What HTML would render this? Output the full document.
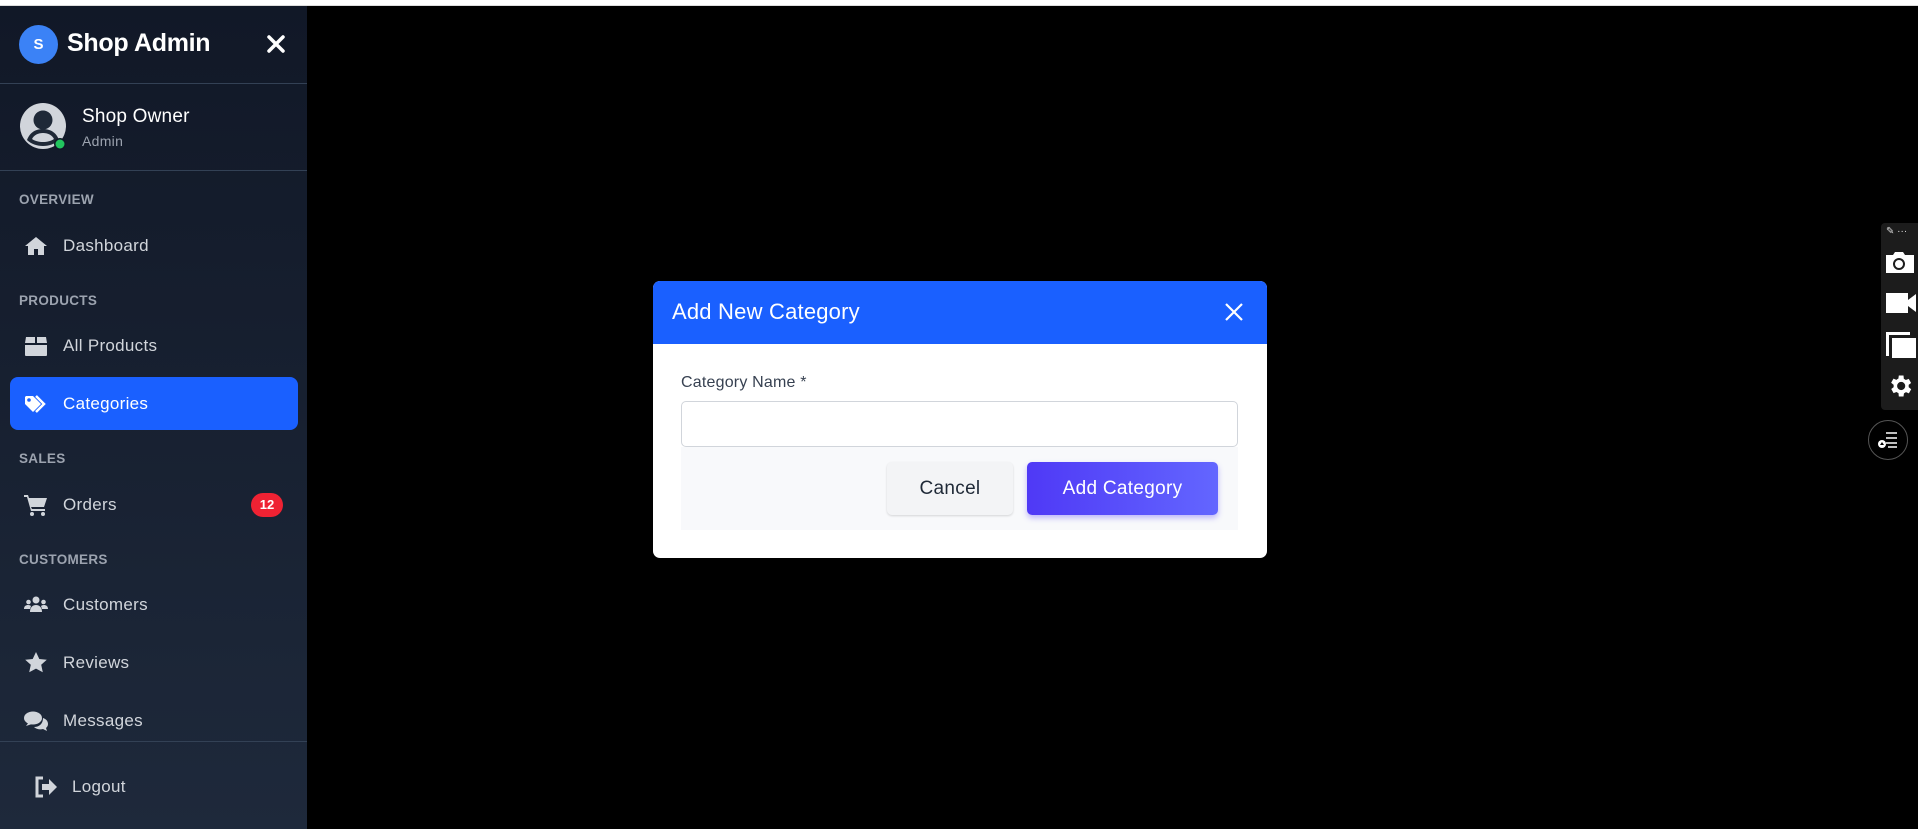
<!DOCTYPE html>
<html><head><meta charset="utf-8"><style>
*{box-sizing:border-box;margin:0;padding:0}
body{width:1918px;height:829px;background:#000;font-family:"Liberation Sans",sans-serif;position:relative;overflow:hidden}
.top{position:absolute;left:0;top:0;width:1918px;height:6px;background:#fff;border-bottom:1px solid #ddd}
.sb{position:absolute;left:0;top:6px;width:307px;height:823px;background:linear-gradient(#111827,#1e293b)}
.a{position:absolute;white-space:nowrap}
.sec{position:absolute;left:19px;font-size:13.5px;font-weight:bold;color:#9ca3af;letter-spacing:.3px}
.it{position:absolute;left:63px;font-size:17px;color:#d1d5db;letter-spacing:.3px}
.ic{position:absolute;left:24px;width:24px;height:24px}
.hr{position:absolute;left:0;width:307px;height:1px;background:#334155}
</style></head><body>
<div class="top"></div>
<div class="sb"></div>
<div class="a" style="left:19px;top:25px;width:39px;height:39px;border-radius:50%;background:#3b82f6;color:#fff;font-weight:bold;font-size:15px;text-align:center;line-height:39px">S</div>
<div class="a" style="left:67px;top:29px;font-size:25px;font-weight:bold;color:#fff;letter-spacing:-.3px">Shop Admin</div>
<svg class="a" style="left:267px;top:35px" width="18" height="18" viewBox="0 0 18 18"><path d="M2 2L16 16M16 2L2 16" stroke="#fff" stroke-width="3.5" stroke-linecap="round"/></svg>
<div class="hr" style="top:83px"></div>
<svg class="a" style="left:20px;top:103px" width="47" height="47" viewBox="0 0 47 47"><circle cx="23" cy="23" r="23" fill="#d1d5db"/><circle cx="23" cy="17" r="9.5" fill="#1f2937"/><path d="M7 37c3-8 9-11 16-11s13 3 16 11c-4 4-10 6-16 6s-12-2-16-6z" fill="#1f2937"/><path d="M12 36c2-4 6-6 11-6s9 2 11 6c-3 2-7 3-11 3s-8-1-11-3z" fill="#d1d5db"/><circle cx="40" cy="41" r="6" fill="#111827"/><circle cx="40" cy="41" r="4.5" fill="#22c55e"/></svg>
<div class="a" style="left:82px;top:106px;font-size:19px;color:#fff;letter-spacing:.2px">Shop Owner</div>
<div class="a" style="left:82px;top:133px;font-size:14px;color:#9ca3af;letter-spacing:.3px">Admin</div>
<div class="hr" style="top:170px"></div>
<div class="sec" style="top:192px">OVERVIEW</div>
<svg class="ic" style="top:234px" viewBox="0 0 24 24"><path d="M12 3L1 12h3v9h6v-6h4v6h6v-9h3z" fill="#d1d5db"/></svg>
<div class="it" style="top:236px">Dashboard</div>
<div class="sec" style="top:293px">PRODUCTS</div>
<svg class="ic" style="top:334px" viewBox="0 0 24 24"><path d="M2 3h9v6H1zM13 3h9l1 6H13zM1 11h22v10a1 1 0 01-1 1H2a1 1 0 01-1-1z" fill="#d1d5db"/></svg>
<div class="it" style="top:336px">All Products</div>
<div class="a" style="left:10px;top:377px;width:288px;height:53px;border-radius:8px;background:#1a60ff"></div>
<svg class="ic" style="top:392px" viewBox="0 0 24 24"><path d="M1 5v7l8 8 8-8-8-8H2z" fill="#fff"/><circle cx="5" cy="8" r="1.8" fill="#1a60ff"/><path d="M12 4l8 8-8 8" stroke="#fff" stroke-width="2.5" fill="none"/></svg>
<div class="it" style="top:394px;color:#fff">Categories</div>
<div class="sec" style="top:451px">SALES</div>
<svg class="ic" style="top:493px" viewBox="0 0 24 24"><path d="M0 2h4l1 3h18l-3 9H7l1 2h13v2H7L3 4H0z" fill="#d1d5db"/><circle cx="8" cy="21" r="2" fill="#d1d5db"/><circle cx="19" cy="21" r="2" fill="#d1d5db"/></svg>
<div class="it" style="top:495px">Orders</div>
<div class="a" style="left:251px;top:493px;width:32px;height:24px;border-radius:12px;background:#ef2233;color:#fff;font-weight:bold;font-size:13px;text-align:center;line-height:24px">12</div>
<div class="sec" style="top:552px">CUSTOMERS</div>
<svg class="ic" style="top:593px" viewBox="0 0 24 24"><circle cx="12" cy="7" r="3.5" fill="#d1d5db"/><circle cx="4.5" cy="9" r="2.3" fill="#d1d5db"/><circle cx="19.5" cy="9" r="2.3" fill="#d1d5db"/><path d="M6 19c0-5 3-7 6-7s6 2 6 7z M0 16c0-3 2-4 4-4s3 1 3 1l-1 3zM24 16c0-3-2-4-4-4s-3 1-3 1l1 3z" fill="#d1d5db"/></svg>
<div class="it" style="top:595px">Customers</div>
<svg class="ic" style="top:651px" viewBox="0 0 24 24"><path d="M12 1l3.3 7 7.5.8-5.6 5 1.6 7.5L12 17.6 5.2 21.3l1.6-7.5-5.6-5 7.5-.8z" fill="#d1d5db"/></svg>
<div class="it" style="top:653px">Reviews</div>
<svg class="ic" style="top:709px" viewBox="0 0 24 24"><ellipse cx="9" cy="9" rx="9" ry="6.5" fill="#d1d5db"/><path d="M2 17l3-4 3 2z" fill="#d1d5db"/><path d="M19 9c3 1 5 3 5 6 0 2-1 3-2 4l1 3-4-2c-3 1-7 0-9-2 5 0 9-3 9-9z" fill="#d1d5db"/></svg>
<div class="it" style="top:711px">Messages</div>
<div class="hr" style="top:741px"></div>
<svg class="a" style="left:34px;top:776px" width="24" height="22" viewBox="0 0 24 22"><path d="M9 2H3v18h6" stroke="#d1d5db" stroke-width="3" fill="none"/><path d="M8 8h7V3l8 8-8 8v-5H8z" fill="#d1d5db"/></svg>
<div class="it" style="top:777px;left:72px">Logout</div>
<div class="a" style="left:653px;top:281px;width:614px;height:277px;background:#fff;border-radius:7px;overflow:hidden">
 <div style="height:63px;background:#1a60ff;position:relative">
  <div class="a" style="left:19px;top:18px;font-size:22px;color:#fff;letter-spacing:.2px">Add New Category</div>
  <svg class="a" style="left:572px;top:22px" width="18" height="18" viewBox="0 0 18 18"><path d="M1 1L17 17M17 1L1 17" stroke="#fff" stroke-width="2.2"/></svg>
 </div>
 <div class="a" style="left:28px;top:93px;font-size:16px;color:#374151;letter-spacing:.2px">Category Name *</div>
 <div class="a" style="left:28px;top:120px;width:557px;height:46px;border:1px solid #d1d5db;border-radius:5px;background:#fff"></div>
 <div class="a" style="left:28px;top:166px;width:557px;height:83px;background:#f8f9fb"></div>
 <div class="a" style="left:234px;top:181px;width:126px;height:53px;background:#f3f4f6;border-radius:5px;box-shadow:0 1px 2px rgba(0,0,0,.15);font-size:19px;color:#1f2937;text-align:center;line-height:53px;letter-spacing:.3px">Cancel</div>
 <div class="a" style="left:374px;top:181px;width:191px;height:53px;background:linear-gradient(90deg,#4f39f6,#6366ff);border-radius:5px;box-shadow:0 3px 6px rgba(79,57,246,.35);font-size:19px;color:#fff;text-align:center;line-height:53px;letter-spacing:.3px">Add Category</div>
</div>
<div class="a" style="left:1881px;top:223px;width:37px;height:187px;background:#1c1c1c;border-radius:4px 0 0 4px"></div>
<div class="a" style="left:1886px;top:226px;font-size:10px;color:#ddd">✎ ···</div>
<svg class="a" style="left:1886px;top:251px" width="28" height="22" viewBox="0 0 28 22"><path d="M0 4h7l2-3h8l2 3h9v18H0z" fill="#fff"/><circle cx="13" cy="13" r="5" fill="none" stroke="#1c1c1c" stroke-width="2"/></svg>
<svg class="a" style="left:1886px;top:293px" width="30" height="20" viewBox="0 0 30 20"><rect x="0" y="0" width="22" height="20" fill="#fff"/><path d="M22 7l8-6v18l-8-6z" fill="#fff"/></svg>
<svg class="a" style="left:1886px;top:332px" width="30" height="26" viewBox="0 0 30 26"><path d="M0 0h24v3H3v21H0z" fill="#fff"/><rect x="6" y="6" width="24" height="20" fill="#fff"/></svg>
<svg class="a" style="left:1886px;top:372px" width="28" height="28" viewBox="0 0 24 24"><path fill="#fff" d="M19.4 13a7.5 7.5 0 000-2l2.1-1.6-2-3.5-2.5 1a7 7 0 00-1.7-1L15 3h-4l-.4 2.7a7 7 0 00-1.7 1l-2.5-1-2 3.5L6.6 11a7.5 7.5 0 000 2l-2.1 1.6 2 3.5 2.5-1a7 7 0 001.7 1L11 21h4l.4-2.7a7 7 0 001.7-1l2.5 1 2-3.5zM13 15.5a3.5 3.5 0 110-7 3.5 3.5 0 010 7z"/></svg>
<div class="a" style="left:1868px;top:420px;width:40px;height:40px;border-radius:50%;border:1px solid #555;background:#000"></div>
<svg class="a" style="left:1877px;top:431px" width="22" height="18" viewBox="0 0 22 18"><path d="M9 2h11M9 7h11M9 12h11M11 16h9" stroke="#fff" stroke-width="1.6"/><circle cx="5" cy="13" r="4" fill="#fff"/><path d="M5 11l2 3H3z" fill="#000"/></svg>
</body></html>
